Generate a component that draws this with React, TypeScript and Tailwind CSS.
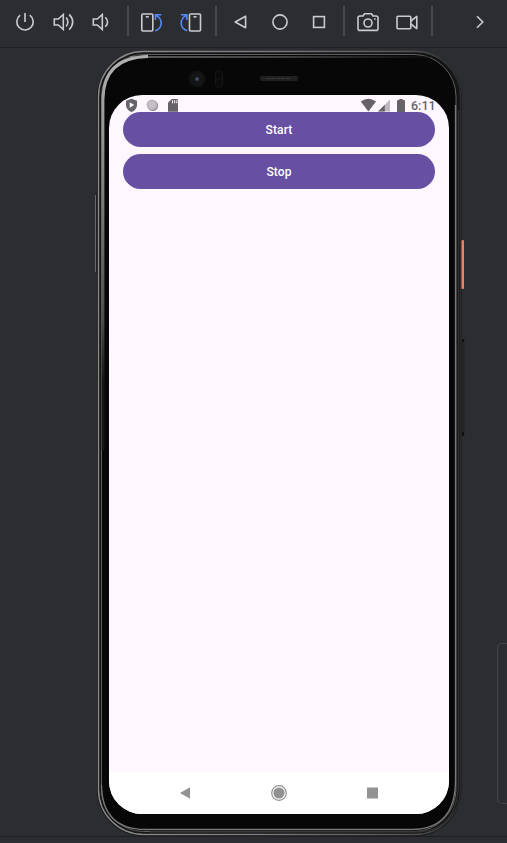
import type { ReactNode } from "react";

const Icon = ({ children, w = 24, className = "" }: { children: ReactNode; w?: number; className?: string }) => (
  <svg
    width={w}
    height="24"
    viewBox={`0 0 ${w} 24`}
    fill="none"
    stroke="#c9cbd0"
    strokeWidth="1.6"
    className={`shrink-0 ${className}`}
  >
    {children}
  </svg>
);

const Divider = ({ className = "" }: { className?: string }) => (
  <div className={`h-[30px] w-[2px] shrink-0 bg-[#47494d] ${className}`} />
);

function Toolbar() {
  return (
    <header className="flex h-[48px] w-full shrink-0 items-start border-b border-[#1f2023] bg-[#2b2d30] pt-[6px]">
      <div className="flex h-[30px] w-[127px] items-center pt-[2px] pl-[13px]">
        <Icon>
          <path d="M12 3v9M7.2 5.2a8.2 8.2 0 1 0 9.6 0" />
        </Icon>
        <Icon className="ml-[15px]">
          <path d="M2.3 9h4l5-4.5v15l-5-4.5h-4zM14.2 7.6q3.4 4.4 0 8.8M17.2 4.4q7 7.6 0 15.2" />
        </Icon>
        <Icon className="ml-[15px]">
          <path d="M2.3 9h4l5-4.5v15l-5-4.5h-4zM14.3 7.2q4.6 4.8 0 9.6" />
        </Icon>
      </div>
      <Divider />
      <div className="flex h-[30px] w-[86px] items-center pt-[1px] pl-[11px]">
        <Icon>
          <rect x="1.8" y="4" width="11" height="17" rx="1" />
          <path d="M5.8 6.8h3" />
          <path stroke="#548af7" d="M15.2 20.8c7.8-2.6 7.8-11.8 1-15.4M15.5 10V4.7h5.8" />
        </Icon>
        <Icon className="ml-[16px]">
          <rect x="9.5" y="4" width="11" height="17" rx="1" />
          <path d="M13.5 6.8h3" />
          <path stroke="#548af7" d="M7.2 20.8C-.6 18.2-.6 9 6.2 5.4M6.8 10V4.7H1" />
        </Icon>
      </div>
      <Divider />
      <div className="flex h-[30px] w-[126px] items-center pt-[2px] pl-[11px]">
        <Icon>
          <path strokeLinejoin="round" d="M7.2 12l10.4-5.8v11.6z" />
        </Icon>
        <Icon className="ml-[16px]">
          <circle cx="12" cy="12" r="7.1" />
        </Icon>
        <Icon className="ml-[15px]">
          <rect x="6.6" y="6.6" width="10.8" height="10.8" />
        </Icon>
      </div>
      <Divider />
      <div className="flex h-[30px] w-[86px] items-center pt-[2px] pl-[11px]">
        <Icon>
          <path d="M2 8a2 2 0 0 1 2-2h3l1.5-2.3h7L17 6h3a2 2 0 0 1 2 2v10.4a2 2 0 0 1-2 2H4a2 2 0 0 1-2-2z" />
          <circle cx="12" cy="13" r="4" />
          <path d="M18 9h1.6" />
        </Icon>
        <Icon className="ml-[15px]">
          <rect x="2" y="6.2" width="13.8" height="12.6" rx="1" />
          <path strokeLinejoin="round" d="M15.8 11l6-4.6v12.2l-6-4.6" />
        </Icon>
      </div>
      <Divider />
      <div className="flex h-[30px] items-center pt-[2px] pl-[35px]">
        <Icon>
          <path strokeWidth="1.6" d="M9 6.2l5.8 5.8L9 17.8" />
        </Icon>
      </div>
    </header>
  );
}

function DeviceFrame() {
  return (
    <svg className="absolute top-0 left-0" width="375" height="787" viewBox="93 50 375 787" fill="none">
      <defs>
        <linearGradient id="rim" x1="97" y1="51" x2="462" y2="51" gradientUnits="userSpaceOnUse">
          <stop offset="0" stopColor="#8b8b8b" />
          <stop offset=".5" stopColor="#77777a" />
          <stop offset=".85" stopColor="#555" />
          <stop offset="1" stopColor="#292a2a" />
        </linearGradient>
        <linearGradient id="inner" x1="0" y1="54" x2="0" y2="832" gradientUnits="userSpaceOnUse">
          <stop offset="0" stopColor="#b4b4b4" />
          <stop offset=".2" stopColor="#777" />
          <stop offset=".34" stopColor="#4c4c4c" />
          <stop offset=".42" stopColor="#161616" />
          <stop offset=".8" stopColor="#181818" />
          <stop offset="1" stopColor="#444" />
        </linearGradient>
        <linearGradient id="topLine" x1="130" y1="0" x2="430" y2="0" gradientUnits="userSpaceOnUse">
          <stop offset="0" stopColor="#b0b0b0" />
          <stop offset=".5" stopColor="#777" />
          <stop offset="1" stopColor="#111" />
        </linearGradient>
        <radialGradient id="lens">
          <stop offset="0" stopColor="#66758f" />
          <stop offset=".3" stopColor="#282e3a" />
          <stop offset=".6" stopColor="#0f1013" />
          <stop offset="1" stopColor="#1b1c1d" />
        </radialGradient>
      </defs>
      <path d="M95.5 195v77" stroke="#68696a" />
      <path d="M96.5 193v81" stroke="#202122" />
      <rect x="97" y="51" width="364.5" height="785" rx="46" fill="#151516" />
      <rect x="98.5" y="51.5" width="362" height="783" rx="45" stroke="url(#rim)" strokeWidth="1.4" />
      <rect x="101.5" y="54.5" width="354.5" height="777" rx="42" fill="#070708" stroke="#5e5e60" strokeWidth="1" />
      <path d="M103 450V100Q103 57.5 148 56.5" stroke="url(#inner)" strokeWidth="2.8" />
      <path d="M130 57h300" stroke="url(#topLine)" strokeWidth="1" />
      <path d="M455.5 105v675Q455.5 829 412 829.5H145Q102 829 101.5 785" stroke="#78787a" strokeWidth="1.3" />
      <path d="M458.5 110v672Q458 832 415 832H150" stroke="#303031" strokeWidth="1.3" />
      <circle cx="197" cy="79" r="8.5" fill="#111213" />
      <circle cx="197" cy="79" r="5.5" fill="url(#lens)" />
      <rect x="215.5" y="70.5" width="7" height="17" rx="3" fill="#0a0a0b" stroke="#151617" />
      <path d="M215 79h8" stroke="#151617" />
      <rect x="260" y="76" width="38" height="5" rx="2" fill="#202020" />
      <path d="M266 78.5h25" stroke="#373737" strokeDasharray="4 1" />
      <rect x="461.5" y="240" width="2.5" height="49" rx="1" fill="#ed8065" />
      <rect x="461.5" y="339" width="3" height="97" rx="1" fill="#222522" />
      <path d="M463 339v3M463 432v4" stroke="#101111" strokeWidth="2" />
    </svg>
  );
}

function StatusBar() {
  return (
    <div className="flex h-[17px] shrink-0 justify-between pr-[13px] pl-[16px]">
      <svg width="56" height="17" viewBox="125 95 56 17">
        <path fill="#66626a" d="M131.5 98.7l5.5 2.1v4.2c0 3.2-2.5 5.9-5.5 7-3-1.1-5.5-3.8-5.5-7v-4.2z" />
        <path fill="#fef7ff" d="M129.7 102.3v5.4l4.5-2.7z" />
        <circle cx="152.7" cy="105.6" r="5.4" fill="#88858a" />
        <circle cx="151.9" cy="104.8" r="5.4" fill="#c6c2c8" />
        <circle cx="151.9" cy="104.8" r="4.1" fill="none" stroke="#aaa6ad" strokeWidth=".7" />
        <path fill="#66626a" d="M171.7 99h5.3q1 0 1 1v11.8h-10v-9z" />
        <path stroke="#fef7ff" strokeWidth="1" d="M172.5 100.3v3M174.7 100.3v3M176.8 100.3v3" />
      </svg>
      <div className="flex">
        <svg width="49" height="17" viewBox="360 95 49 17">
          <path fill="#66626a" d="M360.8 101.4q7.6-5.4 15.2 0l-7.6 10z" />
          <path fill="#bdb8c0" d="M378 111.5L390 99.5v12z" />
          <path fill="#66626a" d="M378 111.5l6.8-6.8v6.8z" />
          <path fill="#66626a" d="M397 101q0-1 1-1h1.3v-1h3.4v1h1.3q1 0 1 1v10.5q0 .7-1 .7h-6q-1 0-1-.7z" />
        </svg>
        <span className="w-[27px] pt-[4px] pl-[2px] text-[12.5px] leading-[14px] font-medium text-[#66626a]">6:11</span>
      </div>
    </div>
  );
}

const PillButton = ({ label }: { label: string }) => (
  <button className="flex h-[35px] w-full shrink-0 items-center justify-center rounded-full bg-[#6750a2] pt-[1px] text-[12px] font-medium tracking-[0.1px] text-white">
    {label}
  </button>
);

function Screen() {
  return (
    <div className="relative mt-[45px] ml-[16px] flex h-[719px] w-[340px] flex-col overflow-hidden rounded-[33px] bg-[#fef7ff]">
      <StatusBar />
      <main className="flex flex-1 flex-col gap-[7px] px-[14px]">
        <PillButton label="Start" />
        <PillButton label="Stop" />
      </main>
      <nav className="flex h-[42px] shrink-0 items-center justify-between bg-white px-[67px]">
        <svg width="18" height="18" viewBox="0 0 18 18">
          <path fill="#929292" d="M4 9l10-5.7v11.4z" />
        </svg>
        <svg width="18" height="18" viewBox="0 0 18 18">
          <circle cx="9" cy="9" r="7.3" fill="none" stroke="#929292" strokeWidth="1.2" />
          <circle cx="9" cy="9" r="5.6" fill="#929292" />
        </svg>
        <svg width="18" height="18" viewBox="0 0 18 18">
          <path fill="#929292" d="M3 3.5h11v11H3z" />
        </svg>
      </nav>
    </div>
  );
}

export default function App() {
  return (
    <div className="flex h-[843px] w-[507px] flex-col overflow-hidden bg-[#2b2d30] font-[Roboto,sans-serif]">
      <Toolbar />
      <div className="flex h-[788px] shrink-0 items-start">
        <div className="relative mt-[2px] ml-[93px] h-[786px] w-[375px] shrink-0">
          <DeviceFrame />
          <div className="flex">
            <Screen />
          </div>
        </div>
        <div className="mt-[595px] ml-[29px] h-[161px] w-[10px] shrink-0 rounded-l-[5px] border border-r-0 border-[#414346]" />
      </div>
      <footer className="h-[7px] w-full border-t border-[#1e1f22] bg-[#2b2d30]" />
    </div>
  );
}
